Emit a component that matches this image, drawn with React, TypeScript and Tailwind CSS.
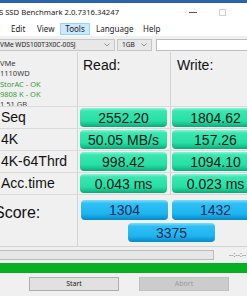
import React from "react";

const green =
  "h-[19px] w-[87px] shrink-0 rounded-[4px] flex items-center justify-center text-[14px] leading-none text-[#161616] bg-[linear-gradient(to_bottom,#86f5d6_0%,#3ae6b0_16%,#27dfa5_68%,#16c38d_86%,#0ea677_100%)]";
const blue =
  "w-[87px] shrink-0 rounded-[4px] flex items-center justify-center text-[14px] leading-none text-[#1a2d55] bg-[linear-gradient(to_bottom,#7adcfc_0%,#2fbff4_18%,#1fb5ef_68%,#0f9cdc_86%,#0a86c6_100%)]";

function Chevron() {
  return (
    <svg width="6" height="4" viewBox="0 0 6 4" className="shrink-0">
      <path d="M0.5 0.5 L3 3 L5.5 0.5" fill="none" stroke="#8a8a8a" strokeWidth="0.9" />
    </svg>
  );
}

function Row({ label, read, write }: { label: string; read: string; write: string }) {
  return (
    <div className="h-[22px] flex border-b border-[#dadada]">
      <div className="w-[78px] shrink-0 border-r border-[#d2d2d2] flex items-center pl-[1px] text-[14px] text-[#111] whitespace-nowrap">
        {label}
      </div>
      <div className="w-[93px] shrink-0 border-r border-[#d2d2d2] pl-[2px] pt-[1px]">
        <div className={green}>{read}</div>
      </div>
      <div className="pl-[1px] pt-[1px]">
        <div className={green}>{write}</div>
      </div>
    </div>
  );
}

export default function App() {
  return (
    <div className="w-[247px] h-[296px] overflow-hidden bg-[#f0f0f0] font-['Liberation_Sans',Arial,sans-serif]">
      <div className="h-[3px] bg-[#2b62ae]" />
      {/* title bar */}
      <div className="h-[19px] bg-white flex items-center text-[7.7px] text-[#222] font-['Noto_Sans',sans-serif]">
        <span className="ml-[-6px] w-[195px] shrink-0 whitespace-nowrap">AS SSD Benchmark 2.0.7316.34247</span>
        <div className="w-[8px] h-px bg-[#555] shrink-0" />
        <div className="ml-[22px] w-[7px] h-[7px] border border-[#d0d0d0] shrink-0" />
      </div>
      {/* menu */}
      <div className="h-[14px] bg-white flex items-center text-[8px] text-[#222] font-['Noto_Sans',sans-serif] whitespace-nowrap">
        <span className="ml-[11px] w-[26px] shrink-0">Edit</span>
        <span className="w-[23px] shrink-0">View</span>
        <span className="w-[30px] h-[12px] shrink-0 bg-[#cce8ff] border border-[#99d1ff] flex items-center justify-center">Tools</span>
        <span className="ml-[6px] w-[47px] shrink-0">Language</span>
        <span className="shrink-0">Help</span>
      </div>
      {/* combo row */}
      <div className="h-[16px] pt-[3px] flex text-[6.6px] text-[#222] font-['Noto_Sans',sans-serif] whitespace-nowrap">
        <div className="w-[116px] h-[12px] shrink-0 ml-[-1px] bg-[#e8e8e8] border border-[#c6c6c6] flex items-center pr-[4px]">
          <span className="flex-1 overflow-hidden">VMe WDS100T3X0C-00SJ</span>
          <Chevron />
        </div>
        <div className="ml-[2px] w-[35px] h-[12px] shrink-0 bg-[#e8e8e8] border border-[#c6c6c6] flex items-center pl-[4px] pr-[4px]">
          <span className="flex-1">1GB</span>
          <Chevron />
        </div>
        <div className="ml-[4px] flex-1 h-[12px] bg-white border border-[#bdbdbd] border-r-0" />
      </div>
      {/* header */}
      <div className="h-[55px] flex border-b border-[#dadada]">
        <div className="w-[78px] shrink-0 border-r border-[#d2d2d2] pt-[6px] overflow-hidden text-[7.5px] leading-[10.3px] font-['Noto_Sans',sans-serif] whitespace-nowrap">
          <div className="text-[#3a3a3a]">VMe</div>
          <div className="text-[#3a3a3a]">1110WD</div>
          <div className="text-[#3b9a3b]">StorAC - OK</div>
          <div className="text-[#3b9a3b]">9808 K - OK</div>
          <div className="text-[#3a3a3a]">1.51 GB</div>
        </div>
        <div className="w-[93px] shrink-0 border-r border-[#d2d2d2] pl-[5px] pt-[3px] text-[14px] text-[#111]">Read:</div>
        <div className="pl-[6px] pt-[3px] text-[14px] text-[#111]">Write:</div>
      </div>
      <Row label="Seq" read="2552.20" write="1804.62" />
      <Row label="4K" read="50.05 MB/s" write="157.26" />
      <Row label="4K-64Thrd" read="998.42" write="1094.10" />
      <Row label="Acc.time" read="0.043 ms" write="0.023 ms" />
      {/* score */}
      <div className="h-[52px] flex border-b border-[#d2d2d2]">
        <div className="w-[78px] shrink-0 border-r border-[#d2d2d2] pt-[6px] text-[16px] text-[#111]">
          <span className="ml-[-6px]">Score:</span>
        </div>
        <div className="flex flex-col pt-[5px]">
          <div className="flex">
            <div className={blue + " h-[20px] ml-[3px]"}>1304</div>
            <div className={blue + " h-[20px] ml-[4px]"}>1432</div>
          </div>
          <div className={blue + " h-[19px] w-[86px] ml-[50px] mt-[3px]"}>3375</div>
        </div>
      </div>
      {/* progress */}
      <div className="h-[16px] flex items-center">
        <div className="w-[214px] h-[10px] shrink-0 bg-[#e6e6e6] border border-[#bcbcbc] border-l-0" />
        <span className="ml-[15px] text-[7px] text-[#777] whitespace-nowrap font-['Noto_Sans',sans-serif]">--:--:--</span>
      </div>
      <div className="h-[10px] bg-[#06b025]" />
      <div className="h-[4px]" />
      <div className="h-[14px] flex text-[7px] font-['Noto_Sans',sans-serif]">
        <div className="ml-[29px] w-[90px] h-[14px] shrink-0 bg-[#e1e1e1] border border-[#adadad] flex items-center justify-center text-[#222]">Start</div>
        <div className="ml-[20px] w-[90px] h-[14px] shrink-0 bg-[#cccccc] border border-[#bfbfbf] flex items-center justify-center text-[#9a9a9a]">Abort</div>
      </div>
    </div>
  );
}
